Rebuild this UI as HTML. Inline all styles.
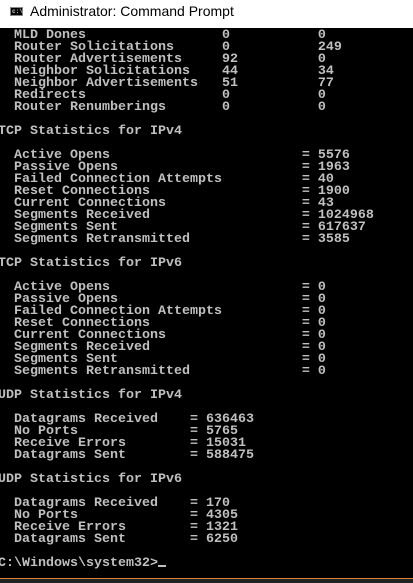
<!DOCTYPE html>
<html><head><meta charset="utf-8"><style>
html,body{margin:0;padding:0;width:413px;height:583px;overflow:hidden;background:#000;}
#title{position:absolute;left:0;top:0;width:413px;height:28px;background:#fff;}
#icon{position:absolute;left:10px;top:7px;width:13px;height:9px;background:#000;border:1px solid #888;box-sizing:border-box;}
#icon span{position:absolute;left:1px;top:0px;font:bold 6px "Liberation Mono",monospace;color:#ccc;line-height:7px;}
#ttext{position:absolute;left:30px;top:3px;font:14px "Liberation Sans","DejaVu Sans",sans-serif;color:#000;}
pre{position:absolute;left:-2px;top:30px;margin:0;font:bold 13.333px/12px "Liberation Mono",monospace;color:#c0c0c0;white-space:pre;}
#cur{display:inline-block;width:8px;height:2px;background:#c0c0c0;vertical-align:-1px;}
#bot{position:absolute;left:0;top:578px;width:413px;height:1px;background:#d8823a;}
#bot2{position:absolute;left:0;top:579px;width:413px;height:4px;background:#222;}
</style></head><body>
<div id="title"><div id="icon"><span>c:\</span></div><div id="ttext">Administrator: Command Prompt</div></div>
<pre>  MLD Dones                 0           0
  Router Solicitations      0           249
  Router Advertisements     92          0
  Neighbor Solicitations    44          34
  Neighbor Advertisements   51          77
  Redirects                 0           0
  Router Renumberings       0           0

TCP Statistics for IPv4

  Active Opens                        = 5576
  Passive Opens                       = 1963
  Failed Connection Attempts          = 40
  Reset Connections                   = 1900
  Current Connections                 = 43
  Segments Received                   = 1024968
  Segments Sent                       = 617637
  Segments Retransmitted              = 3585

TCP Statistics for IPv6

  Active Opens                        = 0
  Passive Opens                       = 0
  Failed Connection Attempts          = 0
  Reset Connections                   = 0
  Current Connections                 = 0
  Segments Received                   = 0
  Segments Sent                       = 0
  Segments Retransmitted              = 0

UDP Statistics for IPv4

  Datagrams Received    = 636463
  No Ports              = 5765
  Receive Errors        = 15031
  Datagrams Sent        = 588475

UDP Statistics for IPv6

  Datagrams Received    = 170
  No Ports              = 4305
  Receive Errors        = 1321
  Datagrams Sent        = 6250

C:\Windows\system32&gt;<span id="cur"></span></pre>
<div id="bot"></div><div id="bot2"></div>
</body></html>
